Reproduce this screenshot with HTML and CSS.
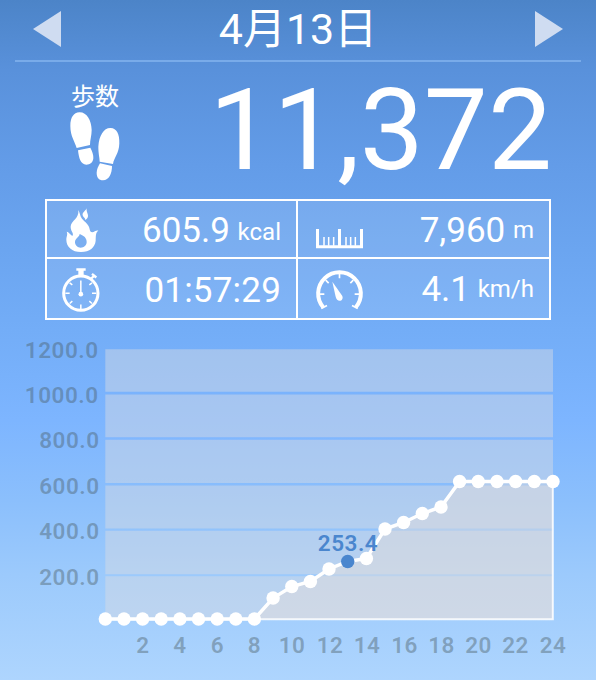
FILE: index.html
```html
<!DOCTYPE html>
<html lang="ja">
<head>
    <meta charset="UTF-8">
    <meta name="viewport" content="width=device-width, initial-scale=1.0">
    <title>歩数計</title>
    <link rel="stylesheet" href="styles.css">
</head>
<body>

<div class="container">
    <div class="header">
        <svg class="arrow" viewBox="0 0 28 36"><path d="M0 18 L28 0 V36 Z"/></svg>
        <h1>4月13日</h1>
        <svg class="arrow" viewBox="0 0 28 36"><path d="M28 18 L0 0 V36 Z"/></svg>
    </div>

    <div class="steps">
        <div class="steps-label">
            <span>歩数</span>
            <svg class="feet" viewBox="210 336 150 210">
                <path d="M238 337 C260 336 274 360 275 390 C275 407 270 420 270 435 L230 444 C225 425 211 410 211 378 C211 352 221 338 238 337 Z"/>
                <path d="M234 451 L271 443 C276 453 281 464 280 475 C279 488 270 494 259 494 C241 493 237 475 234 451 Z"/>
                <path d="M332 384 C350 385 359 402 358 430 C357 462 342 472 339 492 L299 485 C299 472 295 462 295 440 C297 406 312 383 332 384 Z"/>
                <path d="M300 490 L336 498 C336 520 327 541 309 541 C296 541 290 532 290 519 C290 508 295 499 300 490 Z"/>
            </svg>
        </div>
        <div class="steps-count">11,372</div>
    </div>

    <div class="stats">
        <div class="stat">
            <svg class="icon" viewBox="66 30 144 144">
                <path fill-rule="evenodd" d="M115 45 C120 53 120 64 126 71 C135 82 147 87 149 103 C150 109 152 112 157 112 C163 111 168 105 175 107 C166 113 168 125 167 137 C165 157 149 171 123 171 C96 171 79 155 79 134 C79 124 84 119 80 110 C89 112 90 120 98 122 C102 115 91 108 92 94 C94 76 118 71 115 45 Z M119 117 C118 127 105 129 105 142 C105 151 113 158 122 158 C132 158 140 151 140 141 C140 129 132 122 119 117 Z"/>
                <path d="M140 40 C137 48 126 52 128 61 C129 67 136 68 136 75 C145 68 145 64 143 57 C141 51 139 47 140 40 Z"/>
            </svg>
            <div class="value">605.9 <span class="unit kcal">kcal</span></div>
        </div>
        <div class="stat">
            <svg class="icon" viewBox="51 30 144 144">
                <path class="stroke" stroke-width="9" d="M64.500 102 V155 H196.500 V102 M130.500 102 V155"/>
                <path class="stroke" stroke-width="4.500" d="M84 126 V152 M98 126 V152 M113 126 V152 M150 126 V152 M164 126 V152 M178 126 V152"/>
            </svg>
            <div class="value">7,960 <span class="unit">m</span></div>
        </div>
        <div class="stat">
            <svg class="icon" viewBox="66 208.500 144 144">
                <circle class="stroke" stroke-width="9" cx="122.500" cy="293" r="51.500"/>
                <path d="M109 218 H137 V226 H131 V240 H115 V226 H109 Z"/>
                <path class="stroke" stroke-width="7" d="M154 249 L162 241 M156 235 L169 246"/>
                <path class="stroke" stroke-width="4.500" d="M122.500 255 V293 M122.500 327 V342 M76 293 H89 M156 293 H169 M89 262 L97 268 M156 262 L148 268 M89 324 L97 317 M156 324 L148 317"/>
                <circle cx="122.500" cy="296" r="7"/>
            </svg>
            <div class="value time">01:57:29</div>
        </div>
        <div class="stat">
            <svg class="icon" viewBox="51 208.500 144 144">
                <path class="stroke" stroke-width="12" d="M82 336 A64 64 0 1 1 179 336"/>
                <path class="stroke" stroke-width="5" d="M130.500 230 V248 M89 254 L98 263 M172 254 L163 263 M68 296 H85 M176 296 H193 M76 339 L93 330 M185 339 L168 330"/>
                <path d="M109 259 L138 300 C143 309 137 316 131 316 C125 316 121 312 119 304 Z"/>
            </svg>
            <div class="value">4.1 <span class="unit">km/h</span></div>
        </div>
    </div>

    <svg class="chart" viewBox="0 330 596 350">
        <path class="plot" d="M105.300 349.300 H553 V391.800 H105.300 Z M105.300 394.600 H553 V437.300 H105.300 Z M105.300 439.800 H553 V483 H105.300 Z M105.300 485.500 H553 V528.500 H105.300 Z M105.300 530.700 H553 V574.200 H105.300 Z M105.300 576.300 H553 V619.500 H105.300 Z"/>
        <path class="area" d="M254.400 619 L273.100 598 L291.800 586.500 L310.400 581.500 L329 569 L347.700 561.500 L366.400 558.500 L385 529 L403.600 522.500 L422.300 513.500 L441 507 L459.600 481.500 H553 V619 Z"/>
        <path class="base" d="M105.300 619.200 H552.800 V481.500"/>
        <polyline class="line" points="105.300,619 254.400,619 273.100,598 291.800,586.500 310.400,581.500 329,569 347.700,561.500 366.400,558.500 385,529 403.600,522.500 422.300,513.500 441,507 459.600,481.500 553,481.500"/>
        <g class="dots">
            <circle cx="105.300" cy="619" r="6.700"/>
            <circle cx="124" cy="619" r="6.700"/>
            <circle cx="142.600" cy="619" r="6.700"/>
            <circle cx="161.200" cy="619" r="6.700"/>
            <circle cx="179.900" cy="619" r="6.700"/>
            <circle cx="198.500" cy="619" r="6.700"/>
            <circle cx="217.200" cy="619" r="6.700"/>
            <circle cx="235.800" cy="619" r="6.700"/>
            <circle cx="254.400" cy="619" r="6.700"/>
            <circle cx="273.100" cy="598" r="6.700"/>
            <circle cx="291.800" cy="586.500" r="6.700"/>
            <circle cx="310.400" cy="581.500" r="6.700"/>
            <circle cx="329" cy="569" r="6.700"/>
            <circle class="current" cx="347.700" cy="561.500" r="6.700"/>
            <circle cx="366.400" cy="558.500" r="6.700"/>
            <circle cx="385" cy="529" r="6.700"/>
            <circle cx="403.600" cy="522.500" r="6.700"/>
            <circle cx="422.300" cy="513.500" r="6.700"/>
            <circle cx="441" cy="507" r="6.700"/>
            <circle cx="459.600" cy="481.500" r="6.700"/>
            <circle cx="478.200" cy="481.500" r="6.700"/>
            <circle cx="497" cy="481.500" r="6.700"/>
            <circle cx="515.600" cy="481.500" r="6.700"/>
            <circle cx="534.300" cy="481.500" r="6.700"/>
            <circle cx="553" cy="481.500" r="6.700"/>
        </g>
        <text class="current" x="348" y="551">253.4</text>
        <g class="y-axis">
            <text x="98.500" y="358">1200.0</text>
            <text x="98.500" y="403">1000.0</text>
            <text x="99.500" y="448">800.0</text>
            <text x="99.500" y="494">600.0</text>
            <text x="99.500" y="539">400.0</text>
            <text x="99.500" y="585">200.0</text>
        </g>
        <g class="x-axis">
            <text x="143" y="653">2</text>
            <text x="180" y="653">4</text>
            <text x="217.500" y="653">6</text>
            <text x="254.500" y="653">8</text>
            <text x="292" y="653">10</text>
            <text x="330" y="653">12</text>
            <text x="367" y="653">14</text>
            <text x="404.500" y="653">16</text>
            <text x="441.500" y="653">18</text>
            <text x="478.500" y="653">20</text>
            <text x="515.500" y="653">22</text>
            <text x="553" y="653">24</text>
        </g>
    </svg>
</div>

</body>
</html>
```
FILE: styles.css
```css
* {
    box-sizing: border-box;
}
body {
    margin: 0;
    font-family: Roboto, "Noto Sans CJK JP", sans-serif;
    color: white;
}
.container {
    width: 596px;
    height: 680px;
    overflow: hidden;
    background: linear-gradient(#4c84c8 0, #5991db 70px, #639ce8 165px, #6ba5f0 250px, #73adf7 330px, #7db5ff 420px, #8bbffc 500px, #9ccafc 575px, #aed5fe 680px);
}
.header {
    display: flex;
    justify-content: space-between;
    align-items: center;
    height: 62px;
    margin: 0 15px;
    padding: 0 18px 2px;
    border-bottom: 2px solid #79abe9;
}
h1 {
    margin: 0;
    font-size: 43px;
    font-weight: 400;
    line-height: 60px;
}
.arrow {
    width: 28px;
    height: 36px;
    fill: #cfdcf1;
}
.steps {
    display: flex;
    justify-content: space-between;
    height: 137px;
    padding: 20px 44px 0 70px;
}
.steps-label {
    width: 50px;
}
.steps-label span {
    display: block;
    padding-left: 1px;
    font-size: 24px;
    line-height: 30px;
}
.feet {
    display: block;
    width: 50px;
    height: 70px;
    fill: white;
}
.steps-count {
    font-size: 114px;
    line-height: 96px;
}
.stats {
    display: grid;
    grid-template-columns: 249px 251px;
    grid-template-rows: 56px 59px;
    gap: 2px;
    width: 506px;
    height: 121px;
    margin-left: 45px;
    border: 2px solid white;
    background: linear-gradient(white, white) 249px 0 / 2px 100% no-repeat,
        linear-gradient(white, white) 0 56px / 100% 2px no-repeat,
        rgba(255, 255, 255, 0.11);
}
.stat {
    display: flex;
    justify-content: space-between;
    align-items: center;
    padding: 0 15px;
}
.icon {
    width: 48px;
    height: 48px;
    overflow: visible;
    fill: white;
}
.stroke {
    fill: none;
    stroke: white;
}
.value {
    padding-top: 6px;
    font-size: 35px;
    line-height: 50px;
    white-space: nowrap;
}
.time {
    padding-top: 4px;
    letter-spacing: 0.2px;
}
.unit {
    position: relative;
    top: -4px;
    margin-left: -1px;
    font-size: 24px;
}
.unit.kcal {
    top: -2px;
}
.chart {
    display: block;
    width: 596px;
    height: 350px;
    margin-top: 10px;
}
.chart text {
    font-size: 22.500px;
    font-weight: 600;
    letter-spacing: 0.5px;
    text-anchor: middle;
}
.plot {
    fill: rgba(220, 221, 225, 0.44);
}
.area {
    fill: rgba(231, 222, 216, 0.42);
}
.base {
    fill: none;
    stroke: rgba(255, 255, 255, 0.85);
    stroke-width: 2;
}
.line {
    fill: none;
    stroke: white;
    stroke-width: 3.500;
}
.dots {
    fill: white;
}
.chart .current {
    fill: #4a86ce;
}
.y-axis,
.x-axis {
    fill: rgba(72, 90, 96, 0.41);
}
.chart .y-axis text {
    text-anchor: end;
}
```
